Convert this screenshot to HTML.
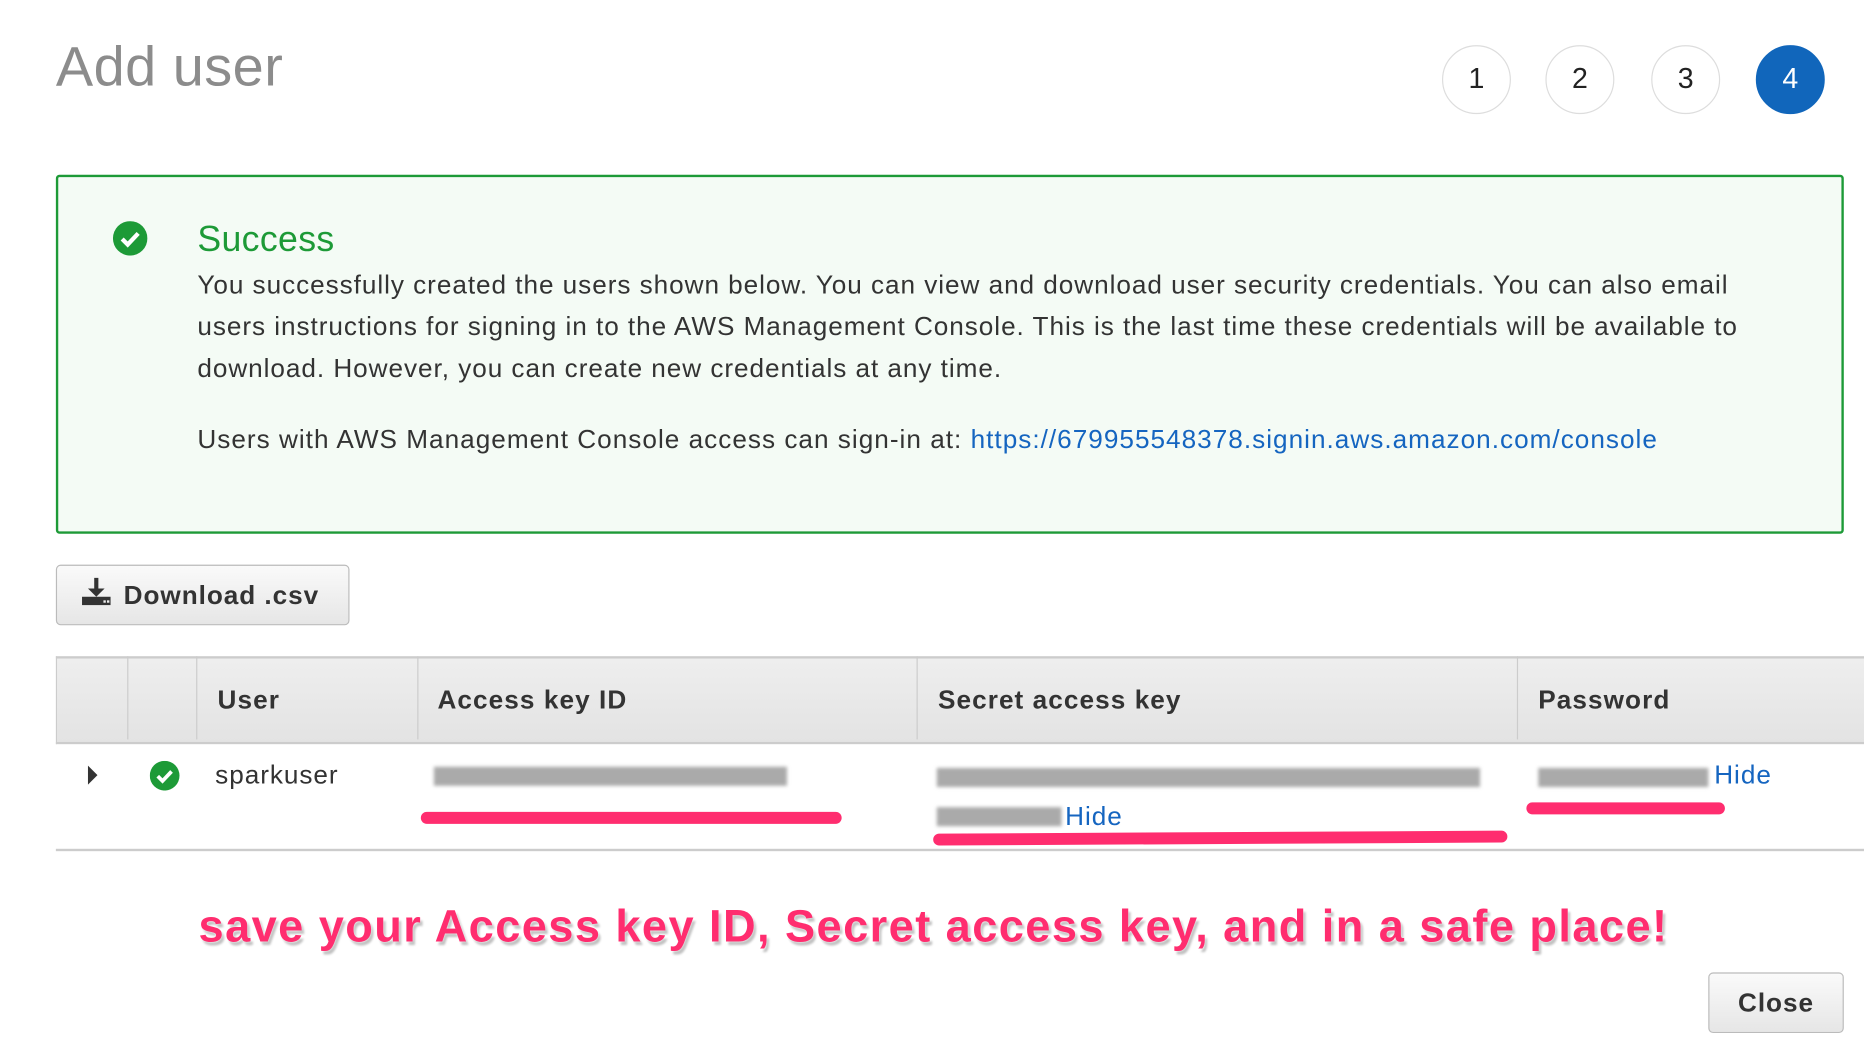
<!DOCTYPE html>
<html><head><meta charset="utf-8"><style>
html,body{margin:0;padding:0;background:#fff;width:1864px;height:1058px;overflow:hidden}
#w{position:absolute;left:0;top:0;width:1568px;height:890px;transform:scale(1.18878);transform-origin:0 0;font-family:"Liberation Sans",Arial,sans-serif;color:#333}
.a{position:absolute;white-space:nowrap}
.c{position:absolute;width:56px;height:56px;border:1px solid #ddd;border-radius:50%;text-align:center;line-height:56px;font-size:24px;color:#222;top:38px}
.bar{position:absolute;background:#aaa;filter:blur(1.5px)}
.pk{position:absolute;background:#ff2d6f;border-radius:6px;height:10px}
.th{position:absolute;top:552px;height:70px;border-left:1px solid #ccc}
.hd{position:absolute;top:576px;font-weight:bold;font-size:22px;color:#333;letter-spacing:0.9px}
.ls{letter-spacing:0.8px}
</style></head><body><div id="w">
<div class="a" style="left:47px;top:28px;font-size:47px;color:#8c8c8c;letter-spacing:0.4px">Add user</div>
<div class="c" style="left:1213px">1</div>
<div class="c" style="left:1300px">2</div>
<div class="c" style="left:1389px">3</div>
<div class="c" style="left:1477px;background:#1166bb;border-color:#1166bb;color:#fff">4</div>

<div style="position:absolute;left:47px;top:147px;width:1500px;height:298px;border:2px solid #1d9a37;border-radius:3px;background:#f4fbf5"></div>
<svg class="a" style="left:95px;top:186px" width="29" height="29" viewBox="0 0 28 28"><circle cx="14" cy="14" r="14" fill="#1d9a37"/><path d="M7.5 14.5l4.5 4.5 8.5-9" stroke="#fff" stroke-width="3.5" fill="none"/></svg>
<div class="a" style="left:166px;top:185px;font-size:30px;color:#1d9a37;letter-spacing:0.3px">Success</div>
<div class="a ls" style="left:166px;top:222px;font-size:22px;line-height:35px;color:#333">You successfully created the users shown below. You can view and download user security credentials. You can also email<br>users instructions for signing in to the AWS Management Console. This is the last time these credentials will be available to<br>download. However, you can create new credentials at any time.</div>
<div class="a" style="left:166px;top:357px;font-size:22px;color:#333;letter-spacing:0.85px">Users with AWS Management Console access can sign-in at: <span style="color:#1565c0">https://679955548378.signin.aws.amazon.com/console</span></div>

<div style="position:absolute;left:47px;top:475px;width:245px;height:49px;border:1px solid #bbb;border-radius:4px;background:linear-gradient(#fafafa,#e6e6e6)"></div>
<svg class="a" style="left:68px;top:486px" width="26" height="24" viewBox="0 0 26 24"><path d="M13 0v12" stroke="#333" stroke-width="3.5"/><path d="M6 9l7 7 7-7z" fill="#333"/><rect x="1" y="16" width="24" height="7" fill="#333"/><rect x="19" y="19" width="2" height="2" fill="#eee"/><rect x="22" y="19" width="2" height="2" fill="#eee"/></svg>
<div class="a" style="left:104px;top:488px;font-size:22px;font-weight:bold;color:#333;letter-spacing:0.8px">Download .csv</div>

<div style="position:absolute;left:47px;top:552px;width:1521px;height:70px;background:linear-gradient(#eee,#e3e3e3);border-top:2px solid #ccc;border-bottom:2px solid #ccc;border-left:1px solid #ccc"></div>
<div class="th" style="left:107px"></div><div class="th" style="left:165px"></div><div class="th" style="left:351px"></div><div class="th" style="left:771px"></div><div class="th" style="left:1276px"></div>
<div class="hd" style="left:183px">User</div>
<div class="hd" style="left:368px">Access key ID</div>
<div class="hd" style="left:789px">Secret access key</div>
<div class="hd" style="left:1294px">Password</div>

<div class="a" style="left:74px;top:644px;width:0;height:0;border-left:8px solid #333;border-top:8px solid transparent;border-bottom:8px solid transparent"></div>
<svg class="a" style="left:126px;top:640px" width="25" height="25" viewBox="0 0 28 28"><circle cx="14" cy="14" r="14" fill="#1d9a37"/><path d="M7.5 14.5l4.5 4.5 8.5-9" stroke="#fff" stroke-width="3.5" fill="none"/></svg>
<div class="a ls" style="left:181px;top:639px;font-size:22px;color:#333">sparkuser</div>

<div class="bar" style="left:365px;top:645px;width:297px;height:16px"></div>
<div class="bar" style="left:788px;top:646px;width:457px;height:16px"></div>
<div class="bar" style="left:788px;top:679px;width:105px;height:16px"></div>
<div class="a ls" style="left:896px;top:674px;font-size:22px;color:#1565c0">Hide</div>
<div class="bar" style="left:1294px;top:646px;width:143px;height:16px"></div>
<div class="a ls" style="left:1442px;top:639px;font-size:22px;color:#1565c0">Hide</div>

<div class="pk" style="left:354px;top:683px;width:354px"></div>
<div class="pk" style="left:785px;top:700px;width:483px;transform:rotate(-0.3deg)"></div>
<div class="pk" style="left:1284px;top:675px;width:167px"></div>
<div style="position:absolute;left:47px;top:714px;width:1521px;height:2px;background:#ccc"></div>

<div class="a" style="left:167px;top:759px;font-size:38px;font-weight:bold;color:#ff2d6f;letter-spacing:1.2px;text-shadow:0 0 2px #fff,2px 3px 2px rgba(0,0,0,.25)">save your Access key ID, Secret access key, and in a safe place!</div>

<div style="position:absolute;left:1437px;top:818px;width:112px;height:49px;border:1px solid #bbb;border-radius:4px;background:linear-gradient(#fafafa,#e6e6e6)"></div>
<div class="a" style="left:1462px;top:831px;font-size:22px;font-weight:bold;color:#333;letter-spacing:0.8px">Close</div>
</div></body></html>
